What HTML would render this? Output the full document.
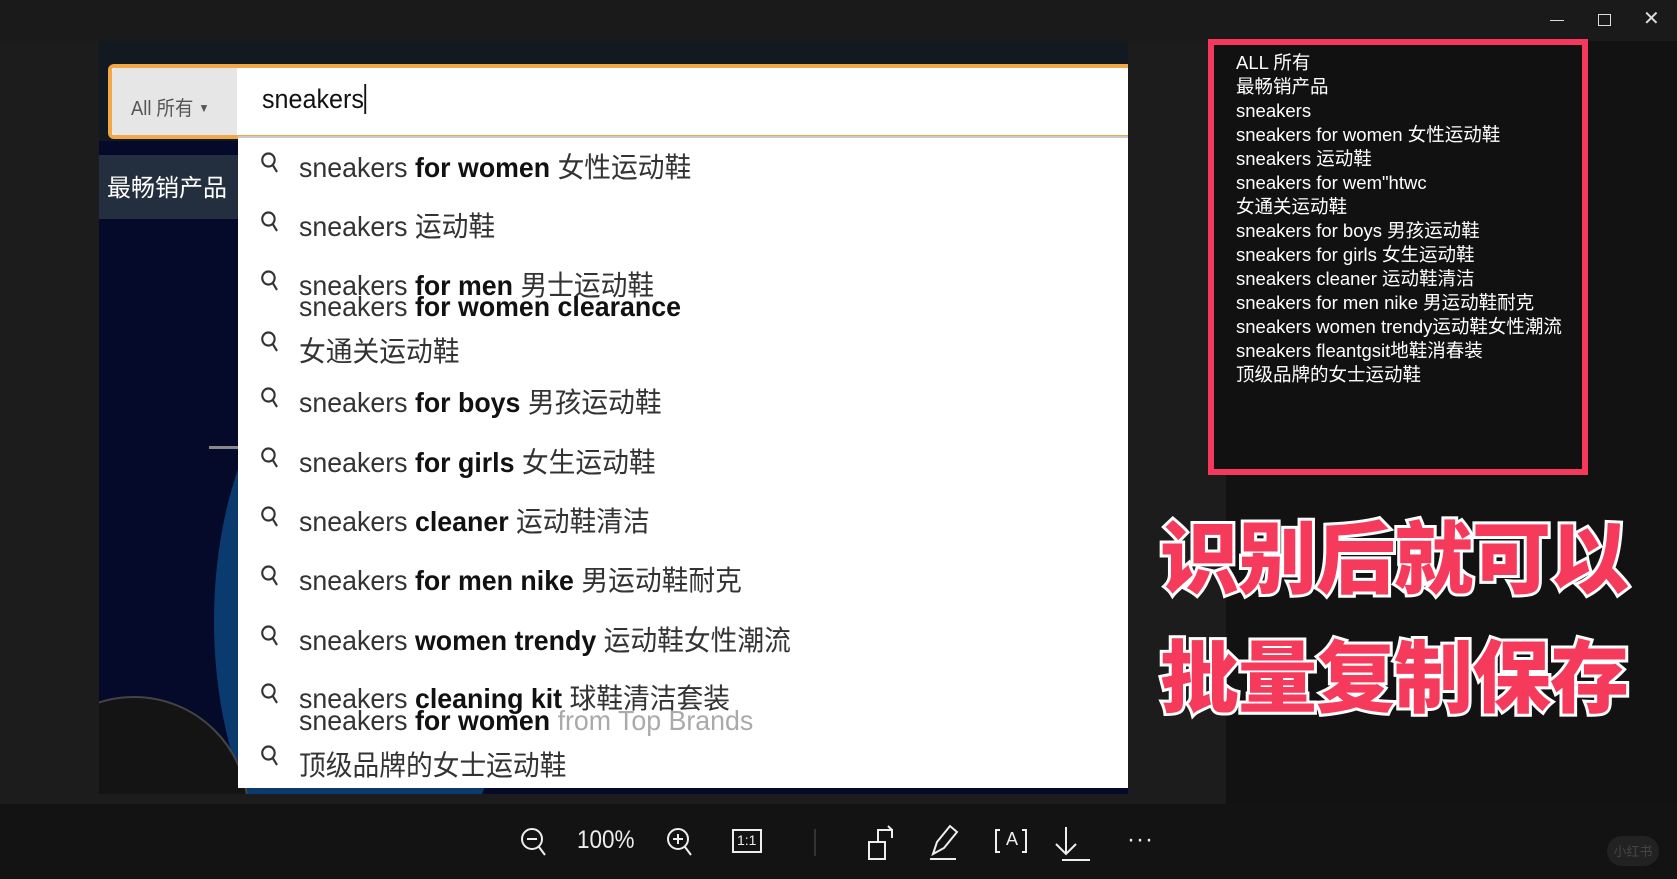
<!DOCTYPE html>
<html><head><meta charset="utf-8"><style>
*{margin:0;padding:0;box-sizing:border-box}
html,body{width:1677px;height:879px;overflow:hidden}
body{background:#1c1c1c;position:relative;font-family:"Liberation Sans","Noto Sans CJK SC",sans-serif}
.abs{position:absolute}
#top{left:0;top:0;width:1677px;height:41px;background:#1a1a1a}
#img{left:99px;top:41px;width:1029px;height:753px;background:#050a2a;overflow:hidden}
#right{left:1226px;top:41px;width:451px;height:763px;background:#121212}
#bar{left:0;top:804px;width:1677px;height:75px;background:#131313}
.sug{font-family:"Liberation Sans","Noto Sans CJK SC",sans-serif;font-size:28px;color:#333;white-space:nowrap;line-height:30px;transform:scaleX(0.955);transform-origin:0 0}
.sug b{color:#111}
.q{position:absolute;left:20px;width:18px;height:22px}
#list div{font-size:18.5px;color:#fff;line-height:24px;white-space:nowrap}
.big{font-family:"Noto Sans CJK SC","WenQuanYi Zen Hei",sans-serif;font-weight:900;font-size:79px;color:#f53a5c;-webkit-text-stroke:6px #fff;paint-order:stroke fill;letter-spacing:-1px;white-space:nowrap;line-height:80px}
</style></head><body>
<div id="top" class="abs"></div>
<div class="abs" style="left:1550px;top:20px;width:14px;height:1px;background:#ddd"></div>
<div class="abs" style="left:1598px;top:14px;width:13px;height:12px;border:1.5px solid #ddd"></div>
<div class="abs" style="left:1643px;top:6px;color:#ddd;font-size:20px">✕</div>

<div id="img" class="abs">
 <div class="abs" style="left:0;top:114px;width:140px;height:64px;background:#232f3e"></div>
 <div class="abs" style="left:8px;top:130px;color:#fff;font-size:24px;font-family:'Noto Sans CJK SC',sans-serif;line-height:30px">最畅销产品</div>
 <div class="abs" style="left:115px;top:300px;width:300px;height:560px;border-radius:50%;background:#0b3b6e"></div>
 <div class="abs" style="left:110px;top:405px;width:40px;height:3px;background:#888"></div>
 <div class="abs" style="left:-80px;top:655px;width:230px;height:230px;border-radius:50%;background:#141414;border:2px solid #444"></div>
 <div class="abs" style="left:0;top:0;width:1029px;height:100px;background:#131921"></div>
</div>

<div class="abs" style="left:108px;top:64px;width:1020px;height:75px;border:4px solid #f3a847;border-right:none;border-radius:6px 0 0 6px;background:#fff"></div>
<div class="abs" style="left:112px;top:68px;width:125px;height:67px;background:#e6e6e6;border-radius:4px 0 0 4px"></div>
<div class="abs" style="left:131px;top:92px;color:#555;font-size:20px;font-family:'Liberation Sans','Noto Sans CJK SC',sans-serif;transform:scaleX(0.92);transform-origin:0 0">All 所有 <span style="font-size:12px;vertical-align:3px">▼</span></div>
<div class="abs" style="left:262px;top:84px;color:#111;font-size:27px;font-family:'Liberation Sans',sans-serif;transform:scaleX(0.93);transform-origin:0 0">sneakers<span style="display:inline-block;width:2px;height:30px;background:#111;vertical-align:-6px"></span></div>

<div class="abs" style="left:238px;top:136px;width:890px;height:652px;background:#fff;border-top:2px solid #ccc">
<svg width="0" height="0" style="position:absolute"><defs><g id="mg"><circle cx="8" cy="8" r="6.5" fill="none" stroke="#333" stroke-width="2.2"/><line x1="12.5" y1="13" x2="17" y2="20" stroke="#333" stroke-width="2.2"/></g></defs></svg>
</div>
<div class="abs sug" style="left:299px;top:153px"><svg class="q" style="left:-40px;top:-1px" viewBox="0 0 18 22"><use href="#mg"/></svg>sneakers <b>for women</b> 女性运动鞋</div>
<div class="abs sug" style="left:299px;top:212px"><svg class="q" style="left:-40px;top:-1px" viewBox="0 0 18 22"><use href="#mg"/></svg>sneakers 运动鞋</div>
<div class="abs sug" style="left:299px;top:271px"><svg class="q" style="left:-40px;top:-1px" viewBox="0 0 18 22"><use href="#mg"/></svg>sneakers <b>for men</b> 男士运动鞋</div>
<div class="abs sug" style="left:299px;top:292px">sneakers <b>for women clearance</b></div>
<div class="abs sug" style="left:299px;top:337px"><svg class="q" style="left:-40px;top:-6px" viewBox="0 0 18 22"><use href="#mg"/></svg>女通关运动鞋</div>
<div class="abs sug" style="left:299px;top:388px"><svg class="q" style="left:-40px;top:-1px" viewBox="0 0 18 22"><use href="#mg"/></svg>sneakers <b>for boys</b> 男孩运动鞋</div>
<div class="abs sug" style="left:299px;top:448px"><svg class="q" style="left:-40px;top:-1px" viewBox="0 0 18 22"><use href="#mg"/></svg>sneakers <b>for girls</b> 女生运动鞋</div>
<div class="abs sug" style="left:299px;top:507px"><svg class="q" style="left:-40px;top:-1px" viewBox="0 0 18 22"><use href="#mg"/></svg>sneakers <b>cleaner</b> 运动鞋清洁</div>
<div class="abs sug" style="left:299px;top:566px"><svg class="q" style="left:-40px;top:-1px" viewBox="0 0 18 22"><use href="#mg"/></svg>sneakers <b>for men nike</b> 男运动鞋耐克</div>
<div class="abs sug" style="left:299px;top:626px"><svg class="q" style="left:-40px;top:-1px" viewBox="0 0 18 22"><use href="#mg"/></svg>sneakers <b>women trendy</b> 运动鞋女性潮流</div>
<div class="abs sug" style="left:299px;top:684px"><svg class="q" style="left:-40px;top:-1px" viewBox="0 0 18 22"><use href="#mg"/></svg>sneakers <b>cleaning kit</b> 球鞋清洁套装</div>
<div class="abs sug" style="left:299px;top:706px">sneakers <b>for women</b> <span style="color:#aaa">from Top Brands</span></div>
<div class="abs sug" style="left:299px;top:751px"><svg class="q" style="left:-40px;top:-6px" viewBox="0 0 18 22"><use href="#mg"/></svg>顶级品牌的女士运动鞋</div>

<div id="right" class="abs"></div>
<div class="abs" style="left:1208px;top:39px;width:380px;height:436px;border:6px solid #f5385c;background:#111"></div>
<div id="list" class="abs" style="left:1236px;top:51px">
<div>ALL 所有</div><div>最畅销产品</div><div>sneakers</div><div>sneakers for women 女性运动鞋</div><div>sneakers 运动鞋</div><div>sneakers for wem"htwc</div><div>女通关运动鞋</div><div>sneakers for boys 男孩运动鞋</div><div>sneakers for girls 女生运动鞋</div><div>sneakers cleaner 运动鞋清洁</div><div>sneakers for men nike 男运动鞋耐克</div><div>sneakers women trendy运动鞋女性潮流</div><div>sneakers fleantgsit地鞋消春装</div><div>顶级品牌的女士运动鞋</div>
</div>
<div class="abs big" style="left:1160px;top:513px">识别后就可以</div>
<div class="abs big" style="left:1160px;top:632px">批量复制保存</div>

<div id="bar" class="abs"></div>
<svg class="abs" style="left:0;top:804px" width="1677" height="75" fill="none" stroke="#eee" stroke-width="2">
 <circle cx="532" cy="35" r="10"/><line x1="539" y1="43" x2="545" y2="51"/><line x1="527" y1="35" x2="537" y2="35"/>
 <circle cx="678" cy="35" r="10"/><line x1="685" y1="43" x2="691" y2="51"/><line x1="673" y1="35" x2="683" y2="35"/><line x1="678" y1="30" x2="678" y2="40"/>
 <rect x="733" y="26" width="28" height="22"/>
 <line x1="815" y1="25" x2="815" y2="52" stroke="#333"/>
 <rect x="869" y="38" width="16" height="17"/><path d="M878 38 V26 H892 V34 M888 22 L892 26"/>
 <path d="M933 50 L937 38 L950 22 L957 28 L944 44 Z"/><line x1="930" y1="55" x2="956" y2="55"/>
 <path d="M1000 26 h-4 v22 h4 M1022 26 h4 v22 h-4"/>
 <path d="M1066 23 V50 M1056 40 L1066 50 L1076 40"/><line x1="1062" y1="56" x2="1090" y2="56"/>
</svg>
<div class="abs" style="left:577px;top:826px;color:#eee;font-size:25px;font-family:'Liberation Sans',sans-serif;transform:scaleX(0.9);transform-origin:0 0">100%</div>
<div class="abs" style="left:737px;top:832px;color:#eee;font-size:14px">1:1</div>
<div class="abs" style="left:1006px;top:829px;color:#eee;font-size:18px">A</div>
<div class="abs" style="left:1127px;top:826px;color:#eee;font-size:24px;letter-spacing:1px">···</div>
<div class="abs" style="left:1607px;top:836px;width:52px;height:30px;border-radius:15px;background:#222;color:#444;font-size:13px;text-align:center;line-height:30px;font-family:'Noto Sans CJK SC',sans-serif">小红书</div>
</body></html>
